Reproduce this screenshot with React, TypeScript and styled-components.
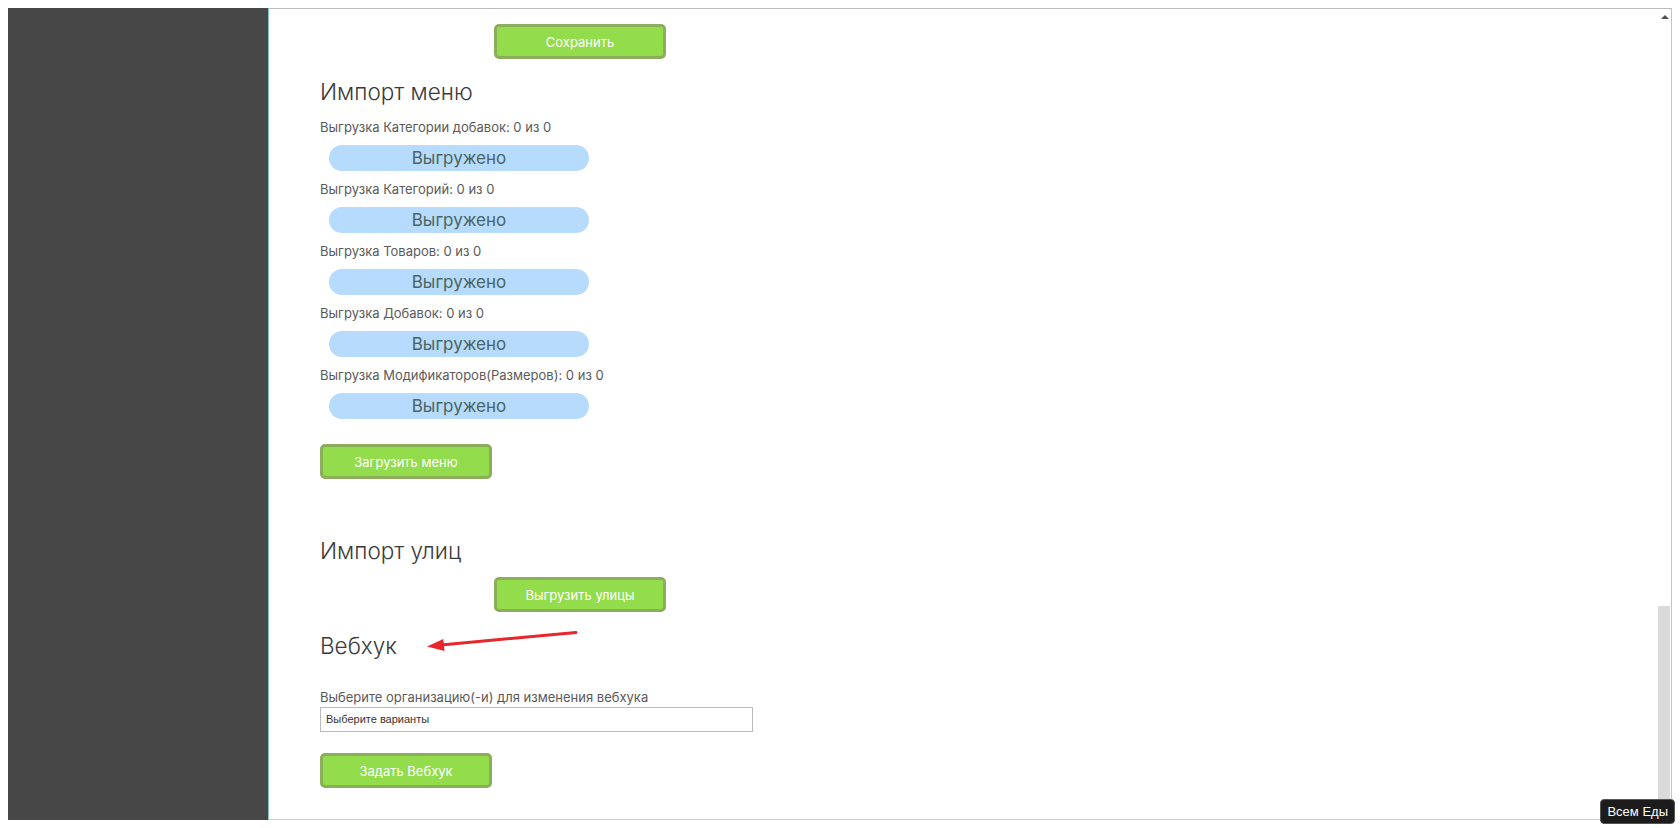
import styled, { createGlobalStyle } from "styled-components"

const GlobalStyle = createGlobalStyle`
    html, body {
        margin: 0;
        background: #ffffff;
    }
    body {
        padding: 8px;
        font-family: Inter, "Noto Sans", sans-serif;
    }
`

const uploads = [
    "Выгрузка Категории добавок: 0 из 0",
    "Выгрузка Категорий: 0 из 0",
    "Выгрузка Товаров: 0 из 0",
    "Выгрузка Добавок: 0 из 0",
    "Выгрузка Модификаторов(Размеров): 0 из 0",
]

const App = () => {
    return (
        <>
            <GlobalStyle />
            <Frame>
                <Sidebar />
                <Main>
                    <Content>
                        <GreenButton $shift>Сохранить</GreenButton>

                        <SectionTitle $top={18}>Импорт меню</SectionTitle>
                        <UploadList>
                            {uploads.map((label) => (
                                <UploadRow key={label}>
                                    <UploadLabel>{label}</UploadLabel>
                                    <StatusPill>Выгружено</StatusPill>
                                </UploadRow>
                            ))}
                        </UploadList>
                        <GreenButton $top={25}>Загрузить меню</GreenButton>

                        <SectionTitle $top={57}>Импорт улиц</SectionTitle>
                        <GreenButton $shift $top={11}>Выгрузить улицы</GreenButton>

                        <TitleRow>
                            <SectionTitle $top={0}>Вебхук</SectionTitle>
                            <Arrow width="156" height="30" viewBox="0 0 156 30">
                                <path d="M152 1.5 L17 14" stroke="#e8262b" strokeWidth="3" strokeLinecap="round" fill="none" />
                                <path d="M3 15.5 L19.3 8 L20.5 20 Z" fill="#e8262b" />
                            </Arrow>
                        </TitleRow>

                        <FieldLabel>Выберите организацию(-и) для изменения вебхука</FieldLabel>
                        <SelectBox>Выберите варианты</SelectBox>
                        <GreenButton $top={21}>Задать Вебхук</GreenButton>
                    </Content>
                    <ScrollTrack>
                        <ScrollArrow />
                        <ScrollThumb />
                    </ScrollTrack>
                </Main>
                <Tooltip>Всем Еды</Tooltip>
            </Frame>
        </>
    )
}

export default App

const Frame = styled.div`
    position: relative;
    display: flex;
    height: 812px;
    width: 1664px;
`

const Sidebar = styled.aside`
    width: 260px;
    flex-shrink: 0;
    background-color: #474747;
    border-right: 1px solid #7cc3bd;
`

const Main = styled.main`
    position: relative;
    flex: 1;
    border-top: 1px solid #bdbdbd;
    border-bottom: 1px solid #cfcfcf;
    border-right: 1px solid #c4c4c4;
    overflow: hidden;
`

const Content = styled.div`
    display: flex;
    flex-direction: column;
    align-items: flex-start;
    padding: 15px 0 0 51px;
`

const GreenButton = styled.button<{ $shift?: boolean; $top?: number }>`
    width: 172px;
    height: 35px;
    margin-top: ${(p) => p.$top ?? 0}px;
    margin-left: ${(p) => (p.$shift ? 174 : 0)}px;
    background-color: #93dc4c;
    border: 3px solid #8cae5b;
    border-radius: 5px;
    color: #ffffff;
    font-family: Inter, "Noto Sans", sans-serif;
    font-size: 13px;
    cursor: pointer;
`

const SectionTitle = styled.h2<{ $top: number }>`
    margin: ${(p) => p.$top}px 0 0 0;
    font-size: 22.5px;
    font-weight: 300;
    color: #3a3a3a;
    line-height: 30px;
`

const UploadList = styled.div`
    display: flex;
    flex-direction: column;
    gap: 9px;
    margin-top: 11px;
`

const UploadRow = styled.div`
    display: flex;
    flex-direction: column;
    align-items: flex-start;
    gap: 9px;
`

const UploadLabel = styled.span`
    font-size: 13px;
    line-height: 18px;
    color: #5a5a5a;
`

const StatusPill = styled.div`
    margin-left: 9px;
    width: 260px;
    height: 26px;
    border-radius: 13px;
    background-color: #b6dbfc;
    color: #4a6464;
    font-size: 17px;
    line-height: 26px;
    text-align: center;
`

const TitleRow = styled.div`
    display: flex;
    align-items: center;
    gap: 27px;
    margin-top: 19px;
    height: 30px;
`

const Arrow = styled.svg`
    flex-shrink: 0;
`

const FieldLabel = styled.label`
    margin-top: 28px;
    font-size: 13px;
    line-height: 16px;
    color: #5a5a5a;
`

const SelectBox = styled.div`
    box-sizing: border-box;
    margin-top: 2px;
    width: 433px;
    height: 25px;
    padding: 0 5px;
    border: 1px solid #bbbbbb;
    font-family: "Liberation Sans", Arial, sans-serif;
    font-size: 11px;
    line-height: 23px;
    color: #333333;
`

const ScrollTrack = styled.div`
    position: absolute;
    top: 0;
    right: 0;
    bottom: 0;
    width: 13px;
`

const ScrollArrow = styled.div`
    position: absolute;
    top: 6px;
    left: 3px;
    width: 0;
    height: 0;
    border-left: 4px solid transparent;
    border-right: 4px solid transparent;
    border-bottom: 4px solid #505050;
`

const ScrollThumb = styled.div`
    position: absolute;
    top: 597px;
    left: 0;
    right: 1px;
    bottom: 14px;
    background-color: #dadada;
`

const Tooltip = styled.div`
    position: absolute;
    right: -3px;
    bottom: -4px;
    padding: 4px 6px;
    background-color: #1c1c1c;
    border: 1px solid #555555;
    border-radius: 4px;
    color: #ffffff;
    font-family: "Liberation Sans", Arial, sans-serif;
    font-size: 13px;
    line-height: 15px;
`
